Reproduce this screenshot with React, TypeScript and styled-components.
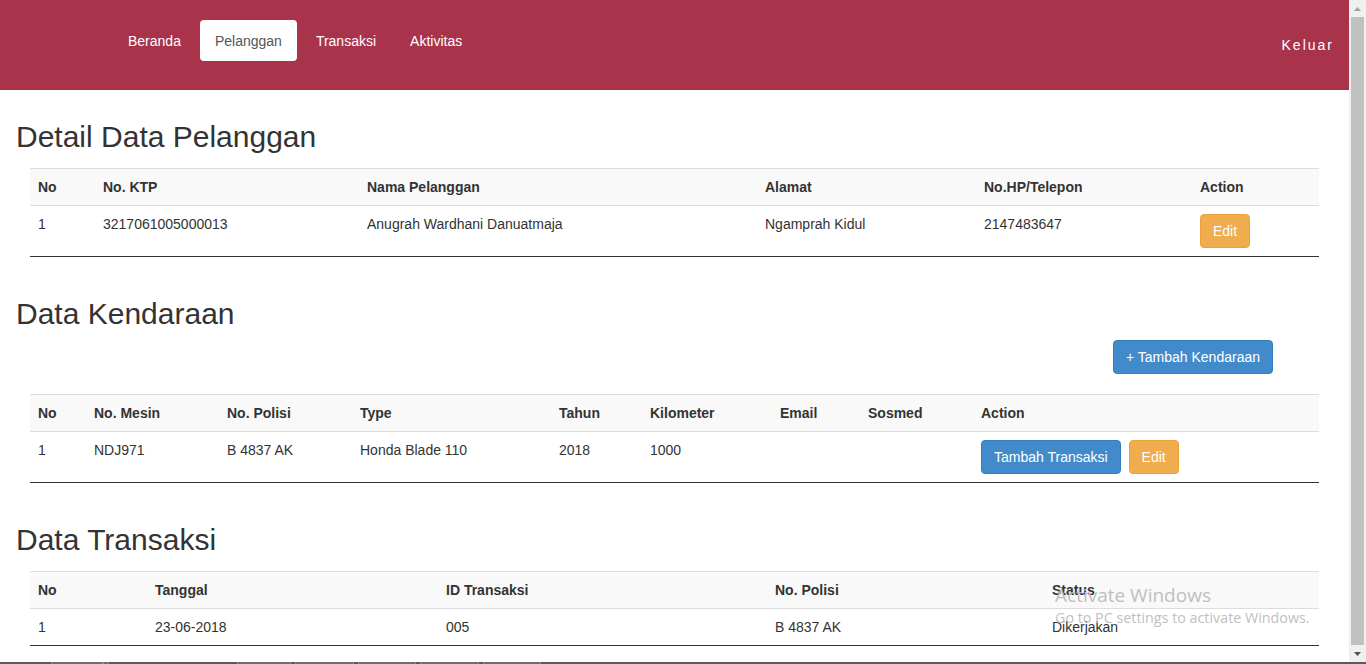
import React from "react";
import styled, { createGlobalStyle } from "styled-components";

const GlobalStyle = createGlobalStyle`
  html, body { margin: 0; padding: 0; height: 100%; overflow: hidden; background: #fff; }
  body {
    font-family: "Liberation Sans", Arial, Helvetica, sans-serif;
    font-size: 14px;
    line-height: 1.42857;
    color: #333;
  }
  * { box-sizing: border-box; }
`;

const Screen = styled.div`
  width: 1366px;
  height: 664px;
  display: flex;
  flex-direction: column;
  overflow: hidden;
`;

const Window = styled.div`
  flex: 1;
  display: flex;
  min-height: 0;
`;

const Page = styled.div`
  flex: 1;
  min-width: 0;
  overflow: hidden;
  background: #fff;
  position: relative;
`;

const Scrollbar = styled.div`
  width: 17px;
  background: #f0f0f0;
  display: flex;
  flex-direction: column;
  align-items: center;
`;

const ScrollArrow = styled.div`
  height: 17px;
  width: 100%;
  display: flex;
  align-items: center;
  justify-content: center;
`;

const ScrollThumb = styled.div`
  flex: 1;
  width: 13px;
  background: #c1c1c1;
`;

const Taskbar = styled.div`
  height: 2px;
  background: #5a5a5a;
  display: flex;
  padding-left: 51px;
  gap: 4px;
`;

const TaskItem = styled.div<{ $w: number; $ml?: number }>`
  width: ${(p) => p.$w}px;
  margin-left: ${(p) => p.$ml ?? 0}px;
  height: 2px;
  background: #6e6e6e;
  border-left: 1px solid #8a8a8a;
  border-right: 1px solid #8a8a8a;
`;

const Navbar = styled.nav`
  height: 90px;
  background: #a8334b;
  display: flex;
  align-items: center;
  padding: 0 15px 0 113px;
`;

const Pills = styled.ul`
  list-style: none;
  margin: 20px 0 0;
  padding: 0;
  display: flex;
  gap: 4px;
  align-self: flex-start;
`;

const PillLink = styled.a<{ $active?: boolean }>`
  display: block;
  padding: 11px 15px 10px;
  line-height: 20px;
  font-size: 14px;
  border-radius: 4px;
  text-decoration: none;
  color: ${(p) => (p.$active ? "#555" : "#fff")};
  background: ${(p) => (p.$active ? "#fff" : "transparent")};
  height: 41px;
`;

const Logout = styled.a`
  margin-left: auto;
  color: #fff;
  font-size: 14px;
  line-height: 20px;
  letter-spacing: 2px;
  text-decoration: none;
`;

const Main = styled.main`
  padding-top: 30px;
  display: flex;
  flex-direction: column;
  gap: 40px;
`;

const Section = styled.section`
  display: flex;
  flex-direction: column;
`;

const Heading = styled.h2<{ $mb: number }>`
  margin: 0 0 ${(p) => p.$mb}px;
  padding-left: 16px;
  font-size: 30px;
  line-height: 33px;
  font-weight: normal;
  color: #333;
`;

const ButtonBar = styled.div`
  display: flex;
  justify-content: flex-end;
  padding-right: 76px;
  margin-bottom: 20px;
`;

const Table = styled.table`
  width: calc(100% - 60px);
  margin: 0 30px;
  border-collapse: collapse;
  table-layout: fixed;
  border-top: 1px solid #ddd;
  border-bottom: 1px solid #333;
`;

const Col = styled.col<{ $w: number }>`
  width: ${(p) => p.$w}px;
`;

const Th = styled.th`
  padding: 8px;
  text-align: left;
  font-weight: bold;
  line-height: 20px;
  background: #f9f9f9;
  border-bottom: 1px solid #ddd;
  vertical-align: bottom;
`;

const Td = styled.td`
  padding: 8px;
  line-height: 20px;
  vertical-align: top;
`;

const Actions = styled.div`
  display: flex;
  gap: 8px;
`;

const Button = styled.button<{ $variant: "primary" | "warning" }>`
  display: inline-block;
  padding: 6px 12px;
  font-family: inherit;
  font-size: 14px;
  line-height: 20px;
  border-radius: 4px;
  color: #fff;
  cursor: pointer;
  border: 1px solid ${(p) => (p.$variant === "primary" ? "#357ebd" : "#eea236")};
  background: ${(p) => (p.$variant === "primary" ? "#428bca" : "#f0ad4e")};
`;

const Watermark = styled.div`
  position: absolute;
  left: 1055px;
  top: 583px;
  font-family: "Open Sans", "Noto Sans", sans-serif;
  color: #bfbfbf;
  pointer-events: none;
  display: flex;
  flex-direction: column;
`;

const WatermarkTitle = styled.span`
  font-size: 19px;
  line-height: 25px;
`;

const WatermarkText = styled.span`
  font-size: 14.3px;
  line-height: 20px;
`;

const ArrowIcon = ({ down, color }: { down?: boolean; color: string }) => (
  <svg width="7" height="4" viewBox="0 0 7 4">
    {down ? <polygon points="0,0 7,0 3.5,4" fill={color} /> : <polygon points="0,4 7,4 3.5,0" fill={color} />}
  </svg>
);

const navItems = ["Beranda", "Pelanggan", "Transaksi", "Aktivitas"];

export default function App() {
  return (
    <>
      <GlobalStyle />
      <Screen>
        <Window>
          <Page>
            <Navbar>
              <Pills>
                {navItems.map((n) => (
                  <li key={n}>
                    <PillLink href="#" $active={n === "Pelanggan"}>
                      {n}
                    </PillLink>
                  </li>
                ))}
              </Pills>
              <Logout href="#">Keluar</Logout>
            </Navbar>
            <Main>
              <Section>
                <Heading $mb={15}>Detail Data Pelanggan</Heading>
                <Table>
                  <colgroup>
                    {[65, 264, 398, 219, 216, 127].map((w, i) => (
                      <Col key={i} $w={w} />
                    ))}
                  </colgroup>
                  <thead>
                    <tr>
                      <Th>No</Th>
                      <Th>No. KTP</Th>
                      <Th>Nama Pelanggan</Th>
                      <Th>Alamat</Th>
                      <Th>No.HP/Telepon</Th>
                      <Th>Action</Th>
                    </tr>
                  </thead>
                  <tbody>
                    <tr>
                      <Td>1</Td>
                      <Td>3217061005000013</Td>
                      <Td>Anugrah Wardhani Danuatmaja</Td>
                      <Td>Ngamprah Kidul</Td>
                      <Td>2147483647</Td>
                      <Td>
                        <Button $variant="warning">Edit</Button>
                      </Td>
                    </tr>
                  </tbody>
                </Table>
              </Section>

              <Section>
                <Heading $mb={10}>Data Kendaraan</Heading>
                <ButtonBar>
                  <Button $variant="primary">+ Tambah Kendaraan</Button>
                </ButtonBar>
                <Table>
                  <colgroup>
                    {[56, 133, 133, 199, 91, 130, 88, 113, 346].map((w, i) => (
                      <Col key={i} $w={w} />
                    ))}
                  </colgroup>
                  <thead>
                    <tr>
                      <Th>No</Th>
                      <Th>No. Mesin</Th>
                      <Th>No. Polisi</Th>
                      <Th>Type</Th>
                      <Th>Tahun</Th>
                      <Th>Kilometer</Th>
                      <Th>Email</Th>
                      <Th>Sosmed</Th>
                      <Th>Action</Th>
                    </tr>
                  </thead>
                  <tbody>
                    <tr>
                      <Td>1</Td>
                      <Td>NDJ971</Td>
                      <Td>B 4837 AK</Td>
                      <Td>Honda Blade 110</Td>
                      <Td>2018</Td>
                      <Td>1000</Td>
                      <Td></Td>
                      <Td></Td>
                      <Td>
                        <Actions>
                          <Button $variant="primary">Tambah Transaksi</Button>
                          <Button $variant="warning">Edit</Button>
                        </Actions>
                      </Td>
                    </tr>
                  </tbody>
                </Table>
              </Section>

              <Section>
                <Heading $mb={15}>Data Transaksi</Heading>
                <Table>
                  <colgroup>
                    {[117, 291, 329, 277, 275].map((w, i) => (
                      <Col key={i} $w={w} />
                    ))}
                  </colgroup>
                  <thead>
                    <tr>
                      <Th>No</Th>
                      <Th>Tanggal</Th>
                      <Th>ID Transaksi</Th>
                      <Th>No. Polisi</Th>
                      <Th>Status</Th>
                    </tr>
                  </thead>
                  <tbody>
                    <tr>
                      <Td>1</Td>
                      <Td>23-06-2018</Td>
                      <Td>005</Td>
                      <Td>B 4837 AK</Td>
                      <Td>Dikerjakan</Td>
                    </tr>
                  </tbody>
                </Table>
              </Section>
            </Main>
            <Watermark>
              <WatermarkTitle>Activate Windows</WatermarkTitle>
              <WatermarkText>Go to PC settings to activate Windows.</WatermarkText>
            </Watermark>
          </Page>
          <Scrollbar>
            <ScrollArrow>
              <ArrowIcon color="#a3a3a3" />
            </ScrollArrow>
            <ScrollThumb />
            <ScrollArrow>
              <ArrowIcon down color="#505050" />
            </ScrollArrow>
          </Scrollbar>
        </Window>
        <Taskbar>
          <TaskItem $w={52} />
          <TaskItem $w={6} $ml={-4} />
          <TaskItem $w={54} $ml={124} />
          <TaskItem $w={59} />
          <TaskItem $w={58} />
          <TaskItem $w={59} />
          <TaskItem $w={58} />
        </Taskbar>
      </Screen>
    </>
  );
}
